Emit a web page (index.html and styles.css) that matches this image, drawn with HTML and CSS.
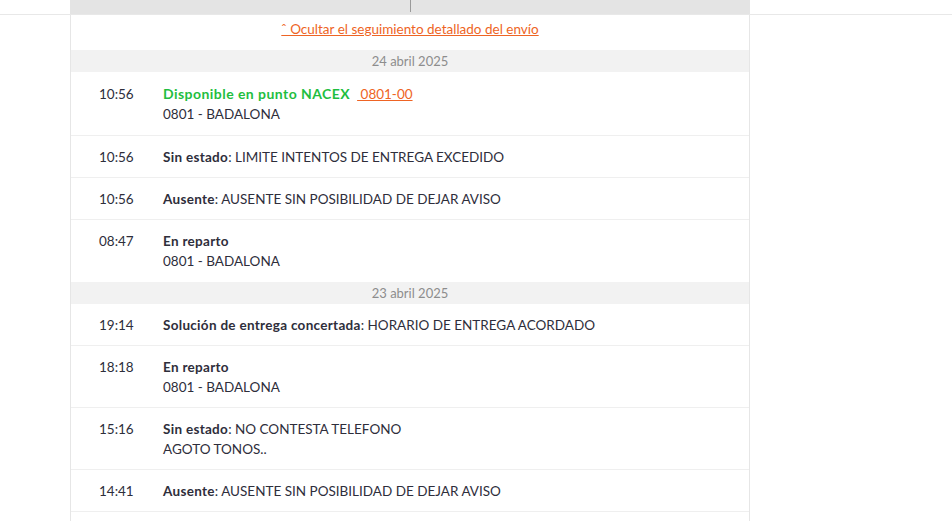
FILE: index.html
```html
<!DOCTYPE html>
<html lang="es">
<head>
<meta charset="utf-8">
<link rel="stylesheet" href="styles.css">
</head>
<body>
<div class="topline">
  <div class="head-bar"><span class="head-tick"></span></div>
</div>
<div class="card">
  <div class="toggle-row"><a class="toggle-link" href="#">ˆ Ocultar el seguimiento detallado del envío</a></div>

  <div class="date">24 abril 2025</div>
  <div class="row first">
    <div class="time">10:56</div>
    <div class="info">
      <div class="title-line"><span class="state-ok">Disponible en punto NACEX</span>&nbsp; <a class="code" href="#">&nbsp;0801-00</a></div>
      <div>0801 - BADALONA</div>
    </div>
  </div>
  <div class="row">
    <div class="time">10:56</div>
    <div class="info"><div><b>Sin estado</b>: LIMITE INTENTOS DE ENTREGA EXCEDIDO</div></div>
  </div>
  <div class="row">
    <div class="time">10:56</div>
    <div class="info"><div><b>Ausente</b>: AUSENTE SIN POSIBILIDAD DE DEJAR AVISO</div></div>
  </div>
  <div class="row">
    <div class="time">08:47</div>
    <div class="info"><div><b>En reparto</b></div><div>0801 - BADALONA</div></div>
  </div>

  <div class="date">23 abril 2025</div>
  <div class="row">
    <div class="time">19:14</div>
    <div class="info"><div><b>Solución de entrega concertada</b>: HORARIO DE ENTREGA ACORDADO</div></div>
  </div>
  <div class="row">
    <div class="time">18:18</div>
    <div class="info"><div><b>En reparto</b></div><div>0801 - BADALONA</div></div>
  </div>
  <div class="row">
    <div class="time">15:16</div>
    <div class="info"><div><b>Sin estado</b>: NO CONTESTA TELEFONO</div><div>AGOTO TONOS..</div></div>
  </div>
  <div class="row">
    <div class="time">14:41</div>
    <div class="info"><div><b>Ausente</b>: AUSENTE SIN POSIBILIDAD DE DEJAR AVISO</div></div>
  </div>
  <div class="row empty">
  </div>
</div>
</body>
</html>
```

FILE: styles.css
```css
html, body {
  margin: 0;
  padding: 0;
  background: #ffffff;
}
body {
  font-family: Lato, "Open Sans", sans-serif;
  font-size: 13.5px;
  color: #2e2e3b;
  overflow: hidden;
  height: 521px;
}
.topline {
  border-bottom: 1px solid #e8e8e8;
}
.head-bar {
  margin-left: 70px;
  width: 680px;
  height: 14px;
  background: #e4e4e4;
  display: flex;
  justify-content: center;
}
.head-tick {
  width: 1px;
  height: 12px;
  background: #9a9a9a;
}
.card {
  margin-left: 70px;
  width: 680px;
  box-sizing: border-box;
  border-left: 1px solid #e6e6e6;
  border-right: 1px solid #e6e6e6;
}
.toggle-row {
  height: 35px;
  box-sizing: border-box;
  padding-top: 4px;
  line-height: 20px;
  text-align: center;
}
.toggle-link {
  color: #ee6424;
  text-decoration: underline;
  font-size: 13.5px;
}
.date {
  background: #f2f2f2;
  color: #8d8d8d;
  text-align: center;
  height: 22px;
  line-height: 22px;
  font-size: 13px;
}
.row {
  display: flex;
  padding: 11px 0 10px 28px;
  border-bottom: 1px solid #efefef;
  line-height: 20px;
}
.row:has(+ .date) {
  border-bottom: none;
  padding-bottom: 11px;
}
.row.first {
  padding-top: 12px;
  padding-bottom: 11px;
}
.row.empty {
  height: 20px;
}
.time {
  width: 64px;
  flex: none;
}
.info b {
  font-weight: 700;
  letter-spacing: 0.3px;
}
.state-ok {
  color: #1fbe3f;
  font-weight: 700;
  font-size: 14px;
  letter-spacing: 0.45px;
}
.code {
  color: #ee6424;
  text-decoration: underline;
}
```
